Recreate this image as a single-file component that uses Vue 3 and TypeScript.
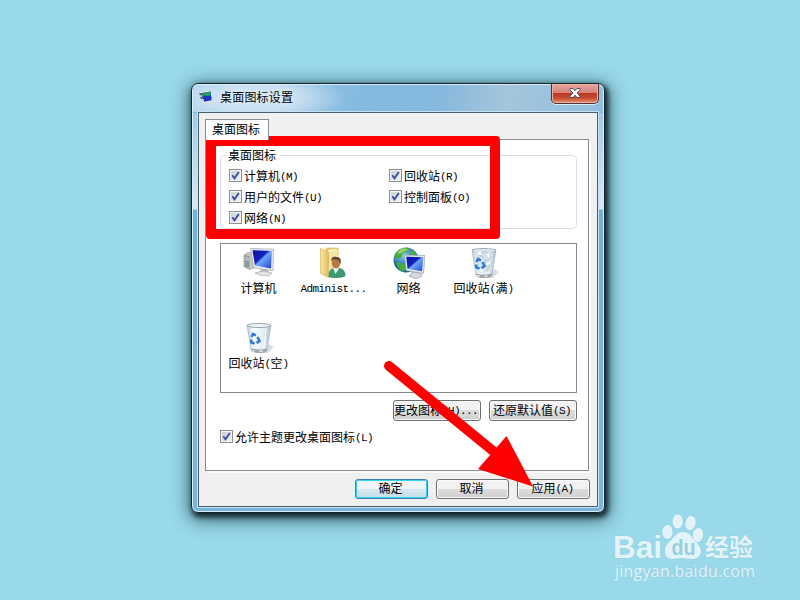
<script setup lang="ts">
interface Option { label: string; key: string }
interface DesktopIcon { kind: 'computer' | 'user' | 'network' | 'full' | 'empty'; label: string; latin: string; tail: string }

const options: Option[] = [
  { label: '计算机', key: '(M)' },
  { label: '回收站', key: '(R)' },
  { label: '用户的文件', key: '(U)' },
  { label: '控制面板', key: '(O)' },
  { label: '网络', key: '(N)' },
]
const icons: DesktopIcon[] = [
  { kind: 'computer', label: '计算机', latin: '', tail: '' },
  { kind: 'user', label: '', latin: 'Administ...', tail: '' },
  { kind: 'network', label: '网络', latin: '', tail: '' },
  { kind: 'full', label: '回收站', latin: '(', tail: '满' },
  { kind: 'empty', label: '回收站', latin: '(', tail: '空' },
]
</script>

<template>
  <main class="desktop">
    <section class="window">
      <header class="titlebar">
        <svg class="appicon" viewBox="0 0 16 16">
          <path d="M4 12l7-2 4 3-5 2.500-5-1z" fill="#d9dde0" />
          <path d="M1 2l12-2 1 11-9 2z" fill="#e9eef2" />
          <path d="M2 3l10.500-2 1 9.500-8 1.500z" fill="#1d35c4" />
          <path d="M3 3l9-2 .5 4-4 1-2-1-3 2z" fill="#20a35b" />
          <path d="M0 3l5-.5-1 2.500-3 0zM1 7l4-.5 0 2.500-3 0z" fill="#4b626c" />
        </svg>
        <h1>桌面图标设置</h1>
        <button class="close" aria-label="关闭">
          <svg viewBox="0 0 14 12"><path d="M2 1.500h3l2 2.300 2-2.300h3v1.300L9.200 6l2.800 3.200v1.300H9L7 8.200 5 10.500H2V9.200L4.800 6 2 2.800z" fill="#fff" stroke="#505064" stroke-width="1" /></svg>
        </button>
      </header>
      <div class="client">
        <div class="tab">桌面图标</div>
        <div class="panel">
          <fieldset class="group">
            <div class="legend">桌面图标</div>
            <div class="options">
              <label v-for="o in options" :key="o.key" class="check">
                <span class="box"><svg viewBox="0 0 13 13"><path d="M3.300 6.300l2.200 3L9.800 3" fill="none" stroke="#3c4f9c" stroke-width="1.900" /></svg></span>
                <span>{{ o.label }}<i>{{ o.key }}</i></span>
              </label>
            </div>
          </fieldset>
          <div class="list">
            <div v-for="ic in icons" :key="ic.kind" class="item">
              <svg viewBox="0 0 32 32">
                <defs>
                  <linearGradient id="screen" x1="0" y1="0" x2="1" y2="1">
                    <stop offset="0" stop-color="#0712a5" /><stop offset=".42" stop-color="#1220c0" /><stop offset=".5" stop-color="#6fa6f4" /><stop offset="1" stop-color="#1c40d8" />
                  </linearGradient>
                  <linearGradient id="folder" x1="0" x2="1"><stop offset="0" stop-color="#f8e7a0" /><stop offset="1" stop-color="#e3bd58" /></linearGradient>
                  <radialGradient id="globe" cx=".4" cy=".3"><stop offset="0" stop-color="#8fd4fa" /><stop offset="1" stop-color="#165fae" /></radialGradient>
                  <linearGradient id="glass" x1="0" x2="1"><stop offset="0" stop-color="#b9cfdc" /><stop offset=".3" stop-color="#f4fafc" /><stop offset=".7" stop-color="#e2edf3" /><stop offset="1" stop-color="#a7bdcb" /></linearGradient>
                </defs>
                <g v-if="ic.kind === 'computer'">
                  <path d="M1 8l4-2.500 7 1v14l-5 2-6-2.500z" fill="#c4c9cc" stroke="#84898e" stroke-width=".6" />
                  <path d="M1.500 8l5 1v12l-5-1.500z" fill="#92979b" />
                  <path d="M2 10.500l4 .7M2 12.500l4 .7" stroke="#e4e7e9" stroke-width=".8" />
                  <circle cx="4" cy="17" r="1" fill="#48cc50" />
                  <path d="M18 20l7 3 1 4-9-1z" fill="#b9bec2" />
                  <path d="M12 26l8-2 9 2-3 3-9-1z" fill="#e3e5e7" stroke="#a0a5aa" stroke-width=".6" />
                  <path d="M7.500 1.500l23 .7-.5 21.500-19.500-3z" fill="#e8ebed" stroke="#9fa5ac" stroke-width=".7" />
                  <path d="M9.500 3.200l19.300.8-.8 17.500-16-3z" fill="url(#screen)" />
                </g>
                <g v-else-if="ic.kind === 'user'">
                  <path d="M14 29h12l2-2-5-4z" fill="#b9bdb6" opacity=".6" />
                  <path d="M8 1l12 0v23l-7 3z" fill="#e8ca70" stroke="#d1ad4c" stroke-width=".5" />
                  <path d="M10 3l9-1v20l-7 3z" fill="#fffadf" />
                  <path d="M2.500 1.500l8 3v26l-8-4z" fill="url(#folder)" stroke="#cfac50" stroke-width=".6" />
                  <path d="M11 5l10-3v20l-10 8z" fill="#f5e29a" opacity=".9" />
                  <path d="M11 30c-.5-6 2-9 7-9s9 1 9 8c-4 2-11 2-16 1z" fill="#3b9a6f" stroke="#277551" stroke-width=".5" />
                  <path d="M15 21l2.500 6 4-6z" fill="#e6eeee" />
                  <ellipse cx="18" cy="16" rx="4.300" ry="5.300" fill="#b77842" />
                  <path d="M13.500 14c-1-4 3-5 5-4 4 0 5 3 4 7l-2-4-5-1z" fill="#594633" />
                </g>
                <g v-else-if="ic.kind === 'network'">
                  <circle cx="13" cy="13" r="12.500" fill="url(#globe)" />
                  <path d="M3 6c3-4 8-6 13-5l-2 4-4 1-2 5-4 0-2 3c-1-3 0-6 1-8zM6 15l6 3 1 4-3 3c-4-2-6-6-7-9zM18 2l5 4-1 4-5-2z" fill="#47ad37" />
                  <path d="M8 2c4-1 7 0 7 1l-5 2-3 2-3-1z" fill="#a9dc74" opacity=".8" />
                  <path d="M19 25l8 1 2 3-6 3-7-3 2-2z" fill="#d6dade" stroke="#8f959d" stroke-width=".6" />
                  <path d="M11.500 8l20.500.5-1.500 18-17.500-3z" fill="#e2e6e9" stroke="#959da6" stroke-width=".7" />
                  <path d="M13.300 9.800l17 .5-1.300 14-14.500-2.600z" fill="url(#screen)" />
                </g>
                <g v-else>
                  <path d="M14 31l11 0 6-6-5-3z" fill="#9aa2a8" opacity=".35" />
                  <path d="M4 3l4 25c4 3 12 3 16 0l4-25z" fill="url(#glass)" stroke="#9ab0bf" stroke-width=".6" />
                  <path d="M9 6l2 20M23 6l-2 20" stroke="#fff" stroke-width="1.500" opacity=".8" />
                  <path d="M7.700 26c4 2 13 2 16.700 0l-.8 3.500c-4 2-11 2-15 0z" fill="#a0a8ad" />
                  <path d="M10 28v1.500M18 28.500v1.500" stroke="#e4e8ea" stroke-width="3" />
                  <ellipse cx="16" cy="3.500" rx="12" ry="2" fill="#eff5f6" stroke="#8d9ba2" stroke-width=".9" />
                  <g v-if="ic.kind === 'full'">
                    <path d="M6 4l5-2 5 1 5-2 5 3-2 9-2 12-12 1-3-12z" fill="#d3e1ea" opacity=".9" />
                    <path d="M7 5l6 4 4-5 4 4 4-3M9 12l5-3 4 5 6-5M18 14l-2 6 6-2-3 6" fill="none" stroke="#b3c6d2" stroke-width="1" />
                    <path d="M8 7l4-3 2 4zM18 7l4-1-1 5zM18 16l4-1-2 4zM10 24l4-2 2 3z" fill="#fff" />
                  </g>
                  <g fill="none" stroke="#2f7ad0" stroke-width="2.500">
                    <path d="M8.500 15l1.500-3 3 1.500" /><path d="M14.500 15l2 4-3 2" /><path d="M11.500 21.500l-3-1-.5-3" />
                  </g>
                </g>
              </svg>
              <span>{{ ic.label }}<i v-if="ic.latin">{{ ic.latin }}</i>{{ ic.tail }}<i v-if="ic.tail">)</i></span>
            </div>
          </div>
          <div class="tools">
            <button class="btn wide">更改图标<i>(H)...</i></button>
            <button class="btn wide">还原默认值<i>(S)</i></button>
          </div>
          <label class="check theme">
            <span class="box"><svg viewBox="0 0 13 13"><path d="M3.300 6.300l2.200 3L9.800 3" fill="none" stroke="#3c4f9c" stroke-width="1.900" /></svg></span>
            <span>允许主题更改桌面图标<i>(L)</i></span>
          </label>
        </div>
        <footer>
          <button class="btn primary">确定</button>
          <button class="btn">取消</button>
          <button class="btn">应用<i>(A)</i></button>
        </footer>
      </div>
    </section>

    <svg class="overlay" viewBox="0 0 800 600">
      <path d="M210 136H496Q500 136 500 140V235Q500 239 496 239H210Q206 239 206 235V140Q206 136 210 136ZM216 146V229H490V146Z" fill="#f00" fill-rule="evenodd" />
      <path d="M389 366L498 455" stroke="#f00" stroke-width="10" stroke-linecap="round" />
      <path d="M506.500 436L533 486.500L478 469Z" fill="#f00" />
      <g class="mark">
        <text x="613" y="558" font-size="31" font-weight="700" textLength="49" lengthAdjust="spacingAndGlyphs" class="latin">Bai</text>
        <ellipse cx="667.500" cy="532" rx="5.200" ry="7" /><ellipse cx="677.700" cy="521.500" rx="5.200" ry="7.200" />
        <ellipse cx="690.500" cy="523" rx="5.200" ry="7.200" transform="rotate(12 690.500 523)" /><ellipse cx="698" cy="535" rx="5.200" ry="7" transform="rotate(8 698 535)" />
        <path d="M683 532c7 0 9 6 13 10 8 7 6 17-4 17-4 0-6-1-10-1s-6 1-9 1c-9 0-11-10-4-17 5-4 7-10 14-10z" />
        <text x="671.500" y="555" font-size="22" font-weight="700" textLength="24" lengthAdjust="spacingAndGlyphs" class="latin cut">du</text>
        <text x="705" y="555.500" font-size="24" font-weight="700" textLength="48" lengthAdjust="spacingAndGlyphs" class="han">经验</text>
        <text x="615" y="577" font-size="16" textLength="140" lengthAdjust="spacing" class="url">jingyan.baidu.com</text>
      </g>
    </svg>
  </main>
</template>

<style>
body { margin: 0; overflow: hidden; }
</style>

<style scoped>
* { box-sizing: border-box; }
.desktop { position: relative; width: 800px; height: 600px; padding: 83px 0 0 191px; background: #99d9ea; font: 12px/16px "Noto Sans CJK SC", sans-serif; color: #000; }
i { font: 11px/12px "Liberation Mono", monospace; letter-spacing: -.6px; vertical-align: 1px; }
.window { width: 414px; height: 430px; padding: 0 6px; border: 1px solid #15242c; border-radius: 7px; background: linear-gradient(#84b8de 0 29px, #a1c9e6 29px, #dae7ef 125px, #73afd7 126px, #80b5da 360px, #79b4dc); box-shadow: inset 0 0 0 1px #d7efff, 2px 3px 5px 1px #162a30, 1px 4px 17px 3px #1c3c48c0; }
.titlebar { display: flex; height: 28px; margin: 0 -5px; padding-left: 6px; align-items: center; border-radius: 6px 6px 0 0; border-top: 1px solid #d7efff; background: radial-gradient(ellipse 95px 28px at 58px 13px, #d3e7f5 0, #c7dff1 50%, #a4cce800 100%), linear-gradient(100deg, #a4cce8, #84bae0 42%, #86b9dd 60%, #a4c5dc 76%, #91bfe0); }
.appicon { width: 15px; height: 16px; margin-top: -2px; }
h1 { margin: -4px 0 0 6px; font: inherit; line-height: 24px; letter-spacing: .2px; text-shadow: 0 0 5px #fff; }
.close { width: 48px; height: 20px; margin: -1px 4px 0 auto; padding: 0; align-self: flex-start; display: grid; place-items: center; border: 1px solid #562d30; border-top: 0; border-radius: 0 0 5px 5px; background: linear-gradient(#e8a69e, #d48178 48%, #b93822 50%, #c94d32 75%, #e39b79); box-shadow: inset 0 0 0 1px #eeb0a4, 0 1px 0 #dceffa; }
.close svg { width: 14px; height: 12px; margin-top: -1px; }
.client { width: 400px; height: 395px; padding: 6px 6px 0; border: 1px solid #43616f; background: #f0f0f0; box-shadow: 0 0 0 1px #c5e1f2; display: flex; flex-direction: column; }
.tab { width: 64px; height: 21px; padding: 0 0 0 6px; border: 1px solid #898c95; border-bottom: 0; background: #fff; position: relative; z-index: 1; line-height: 17px; }
.panel { width: 384px; height: 332px; margin-top: -1px; padding: 15px 11px 0 14px; border: 1px solid #898c95; background: #fff; box-shadow: 2px 2px 0 #fafafa; }
.group { height: 74px; margin: 0; padding: 0 0 0 8px; border: 1px solid #d5dfe5; border-radius: 4px; min-width: 0; }
.legend { width: 53px; height: 16px; margin: -9px 0 0 -2px; padding-left: 1px; background: #fff; }
.options { display: grid; grid-template-columns: 160px 1fr; grid-auto-rows: 21px; margin-top: 2px; }
.check { display: flex; align-items: center; gap: 2px; white-space: nowrap; }
.check > span:last-child { line-height: 20px; }
.box { width: 13px; height: 13px; flex: none; border: 1px solid #8e8f8f; background: linear-gradient(135deg, #c5cbd1, #f4f5f6); box-shadow: inset 0 0 0 1px #f2f3f4; display: block; }
.box svg { display: block; width: 13px; height: 13px; margin: -1px; }
.list { height: 150px; margin-top: 14px; padding-top: 3px; display: grid; grid-template-columns: repeat(4, 75px); grid-auto-rows: 75px; border: 1px solid #828790; }
.item { display: flex; flex-direction: column; align-items: center; }
.item svg { width: 32px; height: 32px; margin-left: 1px; }
.item span { line-height: 16px; margin-top: 1px; white-space: nowrap; }
.tools { display: flex; justify-content: flex-end; gap: 8px; margin-top: 7px; }
.btn { width: 73px; height: 20px; padding: 0 2px 2px 0; border: 1px solid #707070; border-radius: 3px; color: #000; background: linear-gradient(#f2f2f2 50%, #dddddd 50%, #cfcfcf); box-shadow: inset 0 0 0 1px #fafafa; font: 12px/16px "Noto Sans CJK SC", sans-serif; white-space: nowrap; }
.wide { width: 88px; height: 21px; }
.primary { border-color: #3c7fb1; background: linear-gradient(#eef4f7 50%, #d7e8f0 50%, #c5dce8); box-shadow: inset 0 0 0 1px #34d3fa; }
.theme { margin-top: 7px; height: 17px; }
footer { display: flex; justify-content: flex-end; gap: 8px; margin-top: 8px; padding-right: 1px; }
.overlay { position: absolute; left: 0; top: 0; width: 800px; height: 600px; pointer-events: none; }
.mark { fill: #e3f4f9; stroke: #85c4d5; stroke-width: .5; paint-order: stroke; }
.latin { font-family: "Liberation Sans", sans-serif; }
.cut { fill: #94cfdf; stroke: none; }
.han { font-family: "Noto Sans CJK SC", sans-serif; }
.url { font-family: "Open Sans", sans-serif; }
</style>
